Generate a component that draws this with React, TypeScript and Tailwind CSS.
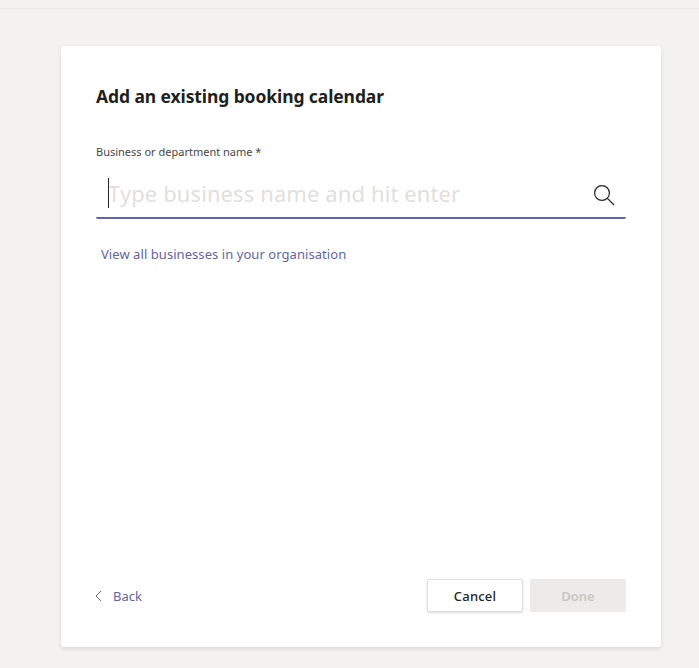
import React from "react";

export default function App() {
  return (
    <div className="relative w-[699px] h-[668px] overflow-hidden bg-[#f3f2f1] flex flex-col font-['Noto_Sans','Open_Sans',sans-serif]">
      <div className="h-[9px] shrink-0 border-b border-[#e9e8e7]" />
      <div className="flex-1 pt-[37px] pl-[61px]">
        <div className="w-[600px] h-[601px] bg-white rounded-[3px] shadow-[0_2px_4px_rgba(0,0,0,0.1)] px-[35px] pt-[38px] pb-[35px] flex flex-col">
          <h1 className="text-[17.5px] leading-[24px] font-bold text-[#201f1e] tracking-[-0.1px]">Add an existing booking calendar</h1>
          <label className="mt-[36px] text-[11px] leading-[16px] text-[#484644]">Business or department name *</label>
          <div className="mt-[4px] h-[55px] border-b-2 border-[#6264a7] rounded-b-[2px] flex items-center relative pl-[12px] pr-[11px] pt-[5px]">
            <span className="absolute left-[12px] top-[14px] w-px h-[30px] bg-[#252423]" />
            <span className="flex-1 text-[22px] leading-[30px] text-[#e1dfdd] tracking-[0.1px]">Type business name and hit enter</span>
            <svg width="22" height="22" viewBox="0 0 22 22" fill="none" stroke="#252423" strokeWidth="1.2" className="mt-[4px]">
              <circle cx="9" cy="9" r="7.4" />
              <path d="M14.4 14.4L21 21" />
            </svg>
          </div>
          <a className="mt-[25px] ml-[5px] text-[13px] leading-[20px] text-[#6264a7] tracking-[0.06px]">View all businesses in your organisation</a>
          <div className="mt-auto flex items-center">
            <svg width="7" height="12" viewBox="0 0 7 12" fill="none" stroke="#6264a7" strokeWidth="1" className="ml-[-1px]">
              <path d="M6 1L1 6L6 11" />
            </svg>
            <span className="ml-[11px] text-[13px] leading-[20px] text-[#6264a7]">Back</span>
            <button className="ml-auto w-[96px] h-[33px] pt-[2px] bg-white border border-[#e1dfdd] rounded-[2px] shadow-[0_1px_3px_rgba(0,0,0,0.15)] text-[13px] font-medium tracking-[0.2px] text-[#252423]">Cancel</button>
            <button className="ml-[7px] w-[96px] h-[33px] pt-[2px] bg-[#edebe9] rounded-[2px] text-[13px] font-semibold text-[#c8c6c4]">Done</button>
          </div>
        </div>
      </div>
    </div>
  );
}
